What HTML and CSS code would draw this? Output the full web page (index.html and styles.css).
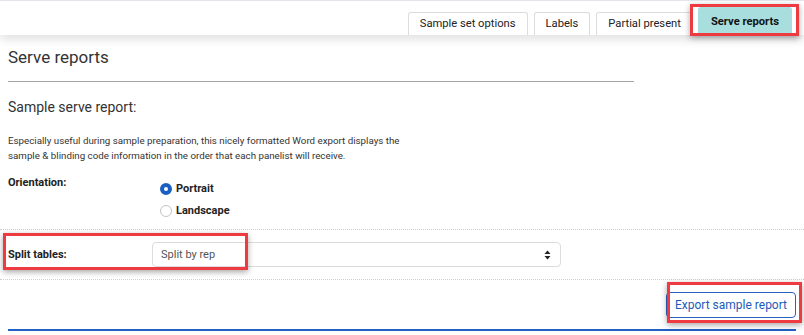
FILE: index.html
```html
<!DOCTYPE html>
<html lang="en">
<head>
    <meta charset="UTF-8">
    <meta name="viewport" content="width=device-width, initial-scale=1.0">
    <title>Serve reports</title>
    <link rel="stylesheet" href="styles.css">
</head>
<body>

    <!-- Abas -->
    <div class="topbar">
        <div class="tab">Sample set options</div>
        <div class="tab">Labels</div>
        <div class="tab">Partial present</div>
        <div class="tab active">Serve reports</div>
    </div>

    <div class="page">
        <h1 class="page-title">Serve reports</h1>
        <hr class="title-rule">

        <h2 class="section-title">Sample serve report:</h2>
        <p class="description">Especially useful during sample preparation, this nicely formatted Word export displays the<br>
            sample &amp; blinding code information in the order that each panelist will receive.</p>

        <div class="form-row orientation-row">
            <div class="form-label">Orientation:</div>
            <div class="radio-group">
                <div class="radio-option"><span class="radio checked"></span>Portrait</div>
                <div class="radio-option"><span class="radio"></span>Landscape</div>
            </div>
        </div>

        <div class="form-row split-row">
            <div class="form-label">Split tables:</div>
            <div class="select-box">
                <span>Split by rep</span>
                <svg width="7" height="10" viewBox="0 0 7 10">
                    <path d="M3.5 0.5 L6.5 4 L0.5 4 Z" fill="#222"/>
                    <path d="M3.5 9.5 L6.5 6 L0.5 6 Z" fill="#222"/>
                </svg>
            </div>
        </div>

        <div class="actions">
            <button class="export-btn">Export sample report</button>
        </div>
        <div class="bottom-rule"></div>
    </div>

    <!-- Destaques -->
    <div class="highlight hl-tab"></div>
    <div class="highlight hl-split"></div>
    <div class="highlight hl-export"></div>

</body>
</html>
```

FILE: styles.css
```css
body {
    margin: 0;
    font-family: Roboto, "Liberation Sans", Arial, sans-serif;
    color: #333;
    background: #fff;
}
.topbar {
    height: 34px;
    border-top: 1px solid #e3e6ea;
    display: flex;
    justify-content: flex-end;
    align-items: flex-end;
    padding-right: 12px;
    box-shadow: 0 4px 10px rgba(0, 0, 0, 0.13);
    position: relative;
    z-index: 1;
}
.tab {
    height: 22px;
    line-height: 22px;
    padding: 0 11px;
    margin-left: 6px;
    font-size: 11.2px;
    color: #222;
    border: 1px solid #dcdcdc;
    border-bottom: none;
    border-radius: 3px 3px 0 0;
    background: #fff;
}
.tab.active {
    height: 27px;
    line-height: 27px;
    margin-left: 5px;
    padding: 0 12px;
    background: #a8dede;
    border-color: #a8dede;
    font-weight: bold;
    color: #111;
}
.page-title {
    font-size: 17px;
    font-weight: normal;
    line-height: 20px;
    margin: 12px 8px 0;
}
.title-rule {
    width: 626px;
    margin: 14px 0 0 8px;
    border: none;
    border-top: 1px solid #a5a5a5;
}
.section-title {
    font-size: 14px;
    font-weight: normal;
    line-height: 18px;
    margin: 16px 8px 0;
}
.description {
    font-size: 9.75px;
    line-height: 15px;
    margin: 17px 8px 0;
}
.form-row {
    display: grid;
    grid-template-columns: 144px 409px;
    padding: 0 8px;
}
.form-label {
    font-size: 11px;
    font-weight: bold;
    color: #222;
}
.orientation-row {
    padding-top: 12px;
    padding-bottom: 7px;
    line-height: 16px;
}
.radio-group {
    margin-top: 3px;
    padding-left: 8px;
}
.radio-option {
    display: flex;
    align-items: center;
    gap: 4px;
    height: 22px;
    font-size: 11px;
    font-weight: bold;
    color: #222;
}
.radio {
    width: 12px;
    height: 12px;
    border: 1px solid #c4c4c4;
    border-radius: 50%;
    box-sizing: border-box;
    display: inline-block;
}
.radio.checked {
    border: 4px solid #1b5fc1;
    background: #fff;
}
.split-row {
    border-top: 1px dotted #cfcfcf;
    border-bottom: 1px dotted #cfcfcf;
    padding-top: 12px;
    padding-bottom: 12px;
    align-items: center;
}
.select-box {
    height: 25px;
    box-sizing: border-box;
    border: 1px solid #dcdcdc;
    border-radius: 4px;
    display: flex;
    align-items: center;
    justify-content: space-between;
    padding: 0 9px 0 8px;
    font-size: 11px;
    color: #555;
}
.actions {
    display: flex;
    justify-content: flex-end;
    padding: 12px 8px 0;
}
.export-btn {
    height: 26px;
    padding: 0 8px;
    font-family: inherit;
    font-size: 12px;
    color: #1d5cb8;
    background: #fff;
    border: 1px solid #2a62c0;
    border-radius: 4px;
}
.bottom-rule {
    height: 2px;
    margin: 11px 8px 0;
    background: #2160c4;
}
/* Caixas vermelhas de destaque */
.highlight {
    position: absolute;
    border: 3px solid #ee3b42;
    box-shadow: 0 2px 6px rgba(0, 0, 0, 0.35);
    z-index: 2;
}
.hl-tab {
    left: 690px;
    top: 4px;
    width: 103px;
    height: 26px;
}
.hl-split {
    left: 3px;
    top: 233px;
    width: 239px;
    height: 31px;
}
.hl-export {
    left: 667px;
    top: 282px;
    width: 129px;
    height: 35px;
}
```
